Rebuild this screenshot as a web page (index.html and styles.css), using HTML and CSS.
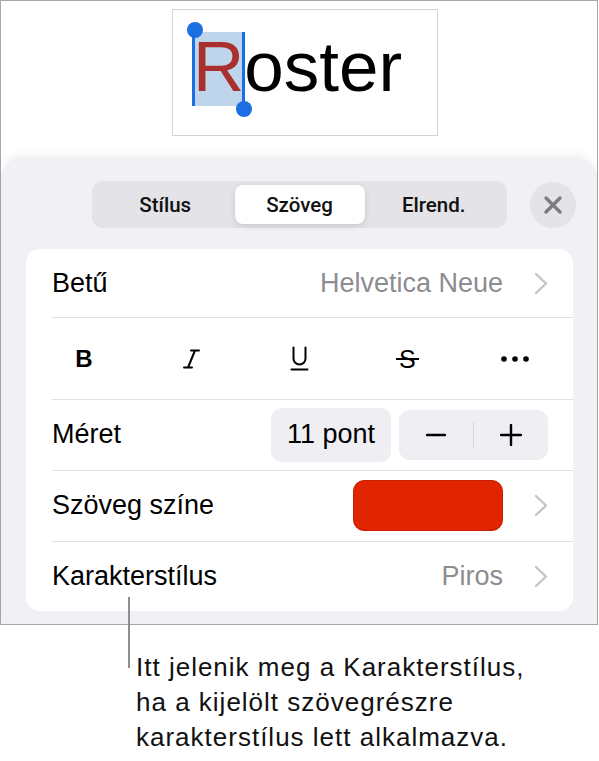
FILE: index.html
```html
<!DOCTYPE html>
<html lang="hu">
<head>
<meta charset="utf-8">
<title>Szöveg</title>
<link rel="stylesheet" href="styles.css">
</head>
<body>
<div class="frame">
  <div class="canvas">
    <div class="textbox"><span class="sel">R<i class="cursor c-start"></i><i class="cursor c-end"></i><i class="knob k-top"></i><i class="knob k-bottom"></i></span>oster</div>
  </div>
  <div class="panel">
    <div class="topbar">
      <div class="seg">
        <div class="seg-item">Stílus</div>
        <div class="seg-item active">Szöveg</div>
        <div class="seg-item">Elrend.</div>
      </div>
      <div class="close">
        <svg width="20" height="20" viewBox="0 0 20 20"><path d="M3 3 L17 17 M17 3 L3 17" stroke="#7c7c81" stroke-width="3.4" stroke-linecap="round" fill="none"/></svg>
      </div>
    </div>
    <div class="card">
      <div class="row r1">
        <span class="label">Betű</span>
        <span class="value">Helvetica Neue</span>
        <svg class="chev" width="14" height="23" viewBox="0 0 14 23"><path d="M2 2 L12 11.5 L2 21" stroke="#c4c4c8" stroke-width="2.4" fill="none" stroke-linecap="round" stroke-linejoin="round"/></svg>
      </div>
      <div class="row r2 fmt">
        <div class="fi b">B</div>
        <div class="fi">
          <svg width="17" height="20" viewBox="0 0 17 20"><path d="M8 1.5 H16 M1 18.5 H9 M12 1.5 L5 18.5" stroke="#000" stroke-width="2" fill="none" stroke-linecap="round"/></svg>
        </div>
        <div class="fi">
          <svg width="19" height="25" viewBox="0 0 19 25"><path d="M3.5 1.5 V12.5 A6 6 0 0 0 15.5 12.5 V1.5" stroke="#000" stroke-width="2" fill="none" stroke-linecap="round"/><path d="M1.5 23.5 H17.5" stroke="#000" stroke-width="2" stroke-linecap="round"/></svg>
        </div>
        <div class="fi"><span class="strike">S</span></div>
        <div class="fi">
          <svg width="28" height="6" viewBox="0 0 28 6"><circle cx="3" cy="3" r="2.8"/><circle cx="14" cy="3" r="2.8"/><circle cx="25" cy="3" r="2.8"/></svg>
        </div>
      </div>
      <div class="row r3">
        <span class="label">Méret</span>
        <span class="grow"></span>
        <div class="size">11 pont</div>
        <div class="stepper">
          <div class="step"><svg width="20" height="4" viewBox="0 0 20 4"><path d="M1 2 H19" stroke="#000" stroke-width="2.4" stroke-linecap="round"/></svg></div>
          <div class="step-div"></div>
          <div class="step"><svg width="22" height="22" viewBox="0 0 22 22"><path d="M1 11 H21 M11 1 V21" stroke="#000" stroke-width="2.4" stroke-linecap="round"/></svg></div>
        </div>
      </div>
      <div class="row r4">
        <span class="label">Szöveg színe</span>
        <span class="grow"></span>
        <div class="swatch"></div>
        <svg class="chev" width="14" height="23" viewBox="0 0 14 23"><path d="M2 2 L12 11.5 L2 21" stroke="#c4c4c8" stroke-width="2.4" fill="none" stroke-linecap="round" stroke-linejoin="round"/></svg>
      </div>
      <div class="row r5">
        <span class="label">Karakterstílus</span>
        <span class="value">Piros</span>
        <svg class="chev" width="14" height="23" viewBox="0 0 14 23"><path d="M2 2 L12 11.5 L2 21" stroke="#c4c4c8" stroke-width="2.4" fill="none" stroke-linecap="round" stroke-linejoin="round"/></svg>
      </div>
    </div>
  </div>
</div>
<div class="callout">
  <div class="leader"></div>
  <p class="note">Itt jelenik meg a Karakterstílus,<br>ha a kijelölt szövegrészre<br>karakterstílus lett alkalmazva.</p>
</div>
</body>
</html>
```

FILE: styles.css
```css
html, body {
  margin: 0;
  padding: 0;
  background: #fff;
}
body {
  font-family: "Liberation Sans", Arial, sans-serif;
  color: #000;
  width: 599px;
  height: 761px;
  overflow: hidden;
}
.frame {
  box-sizing: border-box;
  width: 598px;
  height: 625px;
  border: 1px solid #a9a9ab;
  display: flex;
  flex-direction: column;
  background: #fff;
}
.canvas {
  height: 156px;
  flex: none;
}
.textbox {
  box-sizing: border-box;
  margin: 8px 0 0 171px;
  width: 266px;
  height: 127px;
  border: 1px solid #d3d3d3;
  padding: 22px 0 0 20px;
  font-size: 71px;
  line-height: 70px;
  color: #000;
  white-space: nowrap;
}
.sel {
  position: relative;
  display: inline-block;
  height: 74px;
  background: #bfd5ec;
  color: #a9302c;
}
.cursor {
  position: absolute;
  top: 0;
  bottom: 0;
  width: 3px;
  background: #1b6fe2;
}
.c-start { left: -1px; }
.c-end { right: -1px; }
.knob {
  position: absolute;
  width: 16px;
  height: 16px;
  border-radius: 50%;
  background: #1b6fe2;
}
.k-top { left: -6px; top: -10px; }
.k-bottom { right: -8px; bottom: -11px; }

.panel {
  flex: 1;
  background: #f0f0f5;
  border-radius: 22px 22px 0 0;
  box-shadow: 0 -3px 10px rgba(0, 0, 0, 0.05);
  display: flex;
  flex-direction: column;
}
.topbar {
  display: flex;
  align-items: center;
  padding: 24px 0 0 91px;
}
.seg {
  box-sizing: border-box;
  width: 415px;
  height: 47px;
  background: #e3e3e8;
  border-radius: 11px;
  padding: 4px;
  display: grid;
  grid-template-columns: 1fr 130px 1fr;
}
.seg-item {
  display: flex;
  align-items: center;
  justify-content: center;
  font-family: Roboto, "Liberation Sans", sans-serif;
  font-weight: 500;
  font-size: 20.5px;
  color: #111;
}
.seg-item.active {
  background: #fff;
  border-radius: 8px;
  box-shadow: 0 2px 6px rgba(0, 0, 0, 0.12);
}
.close {
  margin-left: 23px;
  width: 46px;
  height: 46px;
  border-radius: 50%;
  background: #e3e3e8;
  display: flex;
  align-items: center;
  justify-content: center;
}

.card {
  margin: 21px 24px 0 25px;
  background: #fff;
  border-radius: 14px;
}
.row {
  display: flex;
  align-items: center;
  padding: 0 25px 0 26px;
  font-size: 27px;
  background: linear-gradient(#e1e1e4, #e1e1e4) no-repeat 26px 0 / calc(100% - 26px) 1px;
}
.r1 { height: 68px; background: none; }
.r2 { height: 81px; }
.r3 { height: 71px; }
.r4 { height: 71px; }
.r5 { height: 70px; }
.label {
  color: #000;
  white-space: nowrap;
}
.value {
  margin-left: auto;
  color: #8c8c91;
  white-space: nowrap;
}
.grow { flex: 1; }
.chev {
  margin-left: 31px;
  flex: none;
}
.fmt {
  display: grid;
  grid-template-columns: repeat(5, 1fr);
  padding: 1px 4px 0 4px;
}
.fi {
  display: flex;
  align-items: center;
  justify-content: center;
  font-size: 24px;
}
.fi.b { font-weight: bold; }
.strike {
  display: inline-block;
  padding: 0 3px;
  font-size: 25px;
  line-height: 28px;
  background: linear-gradient(#000, #000) no-repeat 0 13px / 100% 2px;
}
.size {
  box-sizing: border-box;
  width: 120px;
  height: 54px;
  border-radius: 11px;
  background: #eeeef3;
  display: flex;
  align-items: center;
  justify-content: center;
  font-size: 27px;
}
.stepper {
  margin-left: 8px;
  width: 149px;
  height: 50px;
  border-radius: 11px;
  background: #eeeef3;
  display: flex;
  align-items: center;
}
.step {
  flex: 1;
  display: flex;
  align-items: center;
  justify-content: center;
}
.step-div {
  width: 1px;
  height: 26px;
  background: #d6d6db;
}
.swatch {
  box-sizing: border-box;
  width: 150px;
  height: 51px;
  border-radius: 11px;
  background: #e02400;
  border: 1px solid #c51f00;
}

.callout {
  position: relative;
  padding: 25px 0 0 136px;
}
.leader {
  position: absolute;
  left: 128px;
  top: -28px;
  width: 2px;
  height: 71px;
  background: #8e8e8e;
}
.note {
  margin: 0;
  font-family: "Liberation Sans", Arial, sans-serif;
  font-size: 26px;
  letter-spacing: 1px;
  line-height: 35px;
  color: #111;
}
```
